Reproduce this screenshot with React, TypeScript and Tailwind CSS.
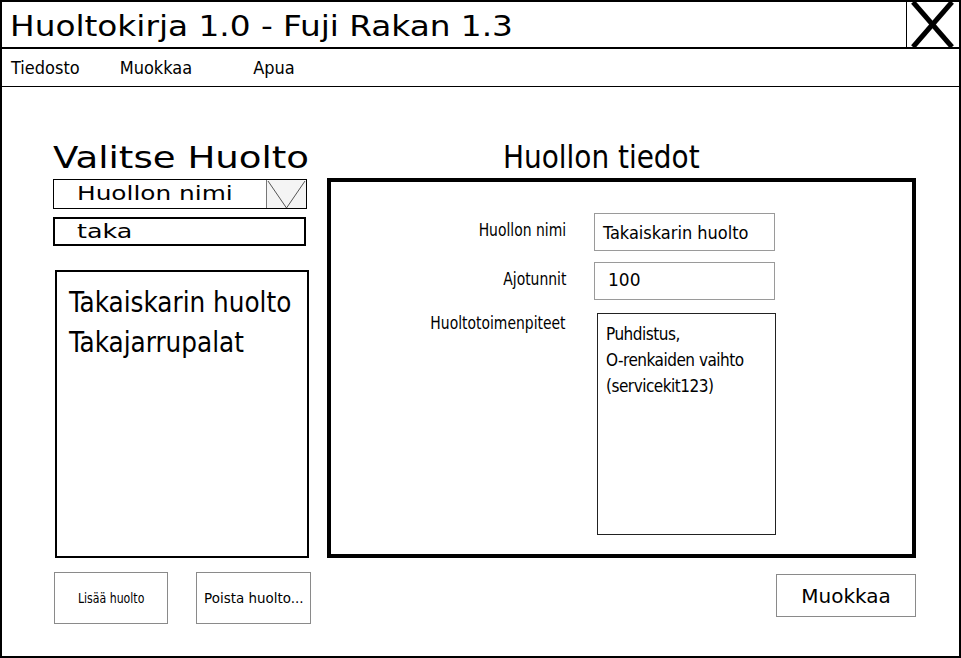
const cond = "font-['DejaVu_Sans_Condensed','DejaVu_Sans',sans-serif]";
const wide = "font-['DejaVu_Sans',sans-serif]";

function Field({ label, value, valueClass }: { label: string; value: string; valueClass: string }) {
  return (
    <>
      <div className={`${cond} text-[17px] text-right self-center -mt-[2px]`}>
        <span className="inline-block origin-right scale-x-[0.91]">{label}</span>
      </div>
      <div className={`h-[38px] border border-[#9a9a9a] flex items-center ${valueClass}`}>{value}</div>
    </>
  );
}

export default function App() {
  return (
    <div className="w-[961px] h-[658px] bg-white border-2 border-black flex flex-col text-black overflow-hidden">
      {/* title bar */}
      <div className="h-[47px] border-b-2 border-black flex shrink-0">
        <div className={`flex-1 pl-[8px] pt-[3px] text-[29px] ${cond}`}>
          <span className="inline-block origin-left scale-x-[1.255] whitespace-nowrap">Huoltokirja 1.0 - Fuji Rakan 1.3</span>
        </div>
        <div className="w-[53px] border-l border-black">
          <svg width="52" height="45" viewBox="0 0 52 45">
            <line x1="6" y1="0" x2="45" y2="45" stroke="black" strokeWidth="5" />
            <line x1="45" y1="0" x2="6" y2="45" stroke="black" strokeWidth="5" />
          </svg>
        </div>
      </div>

      {/* menu */}
      <div className={`h-[38px] border-b border-black flex items-center shrink-0 ${cond} text-[18px]`}>
        <span className="ml-[9px]">Tiedosto</span>
        <span className="ml-[40px]">Muokkaa</span>
        <span className="ml-[61px]">Apua</span>
      </div>

      {/* body */}
      <div className="flex pl-[51px]">
        {/* left column */}
        <div className="w-[258px] flex flex-col">
          <div className={`mt-[49px] h-[43px] flex items-end pb-[3px] text-[30px] leading-[36px] ${wide}`}>
            <span className="inline-block origin-left scale-x-[1.237] whitespace-nowrap">Valitse Huolto</span>
          </div>
          <div className="h-[30px] w-[254px] border border-black flex">
            <div className={`flex-1 pl-[23px] text-[20px] leading-[26px] ${wide}`}>
              <span className="inline-block origin-left scale-x-[1.24] whitespace-nowrap">Huollon nimi</span>
            </div>
            <div className="w-[40px] border-l border-[#777] bg-[#f4f4f4]">
              <svg width="39" height="28" viewBox="0 0 39 28">
                <polyline points="1,1 19.5,28 38,1" fill="none" stroke="#555" strokeWidth="1" />
              </svg>
            </div>
          </div>
          <div className={`mt-[8px] h-[29px] w-[253px] border-2 border-black pl-[22px] text-[20px] leading-[24px] ${wide}`}>
            <span className="inline-block origin-left scale-x-[1.27]">taka</span>
          </div>
          <div className={`mt-[24px] ml-[2px] h-[288px] w-[254px] border-2 border-black pl-[12px] pt-[10px] text-[27.5px] leading-[40px] ${cond}`}>
            <div>Takaiskarin huolto</div>
            <div>Takajarrupalat</div>
          </div>
          <div className="mt-[14px] flex">
            <button className={`ml-[1px] w-[114px] h-[52px] border border-[#8a8a8a] ${cond} text-[14px]`}>
              <span className="inline-block scale-x-[0.87]">Lisää huolto</span>
            </button>
            <button className={`ml-[28px] w-[115px] h-[52px] border border-[#8a8a8a] ${wide} text-[14px]`}>
              <span className="inline-block scale-x-[0.96] whitespace-nowrap">Poista huolto...</span>
            </button>
          </div>
        </div>

        {/* right column */}
        <div className="ml-[16px] w-[589px] flex flex-col">
          <div className={`mt-[49px] h-[42px] flex items-end pl-[176px] pb-[2px] text-[32px] leading-[38px] ${cond}`}>
            <span className="inline-block origin-left scale-x-[0.97] whitespace-nowrap">Huollon tiedot</span>
          </div>
          <div className="h-[380px] border-4 border-black grid grid-cols-[235px_181px] gap-x-[28px] content-start pt-[31px]">
            <Field label="Huollon nimi" value="Takaiskarin huolto" valueClass={`pl-[8px] ${cond} text-[18px]`} />
            <div className="col-span-2 h-[11px]" />
            <Field label="Ajotunnit" value="100" valueClass={`pl-[13px] ${wide} text-[17px]`} />
            <div className="col-span-2 h-[13px]" />
            <div className={`${cond} text-[17px] text-right leading-[20px]`}>
              <span className="inline-block origin-right scale-x-[0.91]">Huoltotoimenpiteet</span>
            </div>
            <div className={`ml-[3px] h-[222px] w-[179px] border border-[#222] px-[8px] pt-[7px] ${cond} text-[17px] leading-[26px] tracking-[-0.5px]`}>
              <div>Puhdistus,</div>
              <div>O-renkaiden vaihto</div>
              <div>(servicekit123)</div>
            </div>
          </div>
          <div className="mt-[16px] flex justify-end">
            <button className={`w-[140px] h-[43px] border border-[#8a8a8a] ${wide} text-[20px]`}>Muokkaa</button>
          </div>
        </div>
      </div>
    </div>
  );
}
